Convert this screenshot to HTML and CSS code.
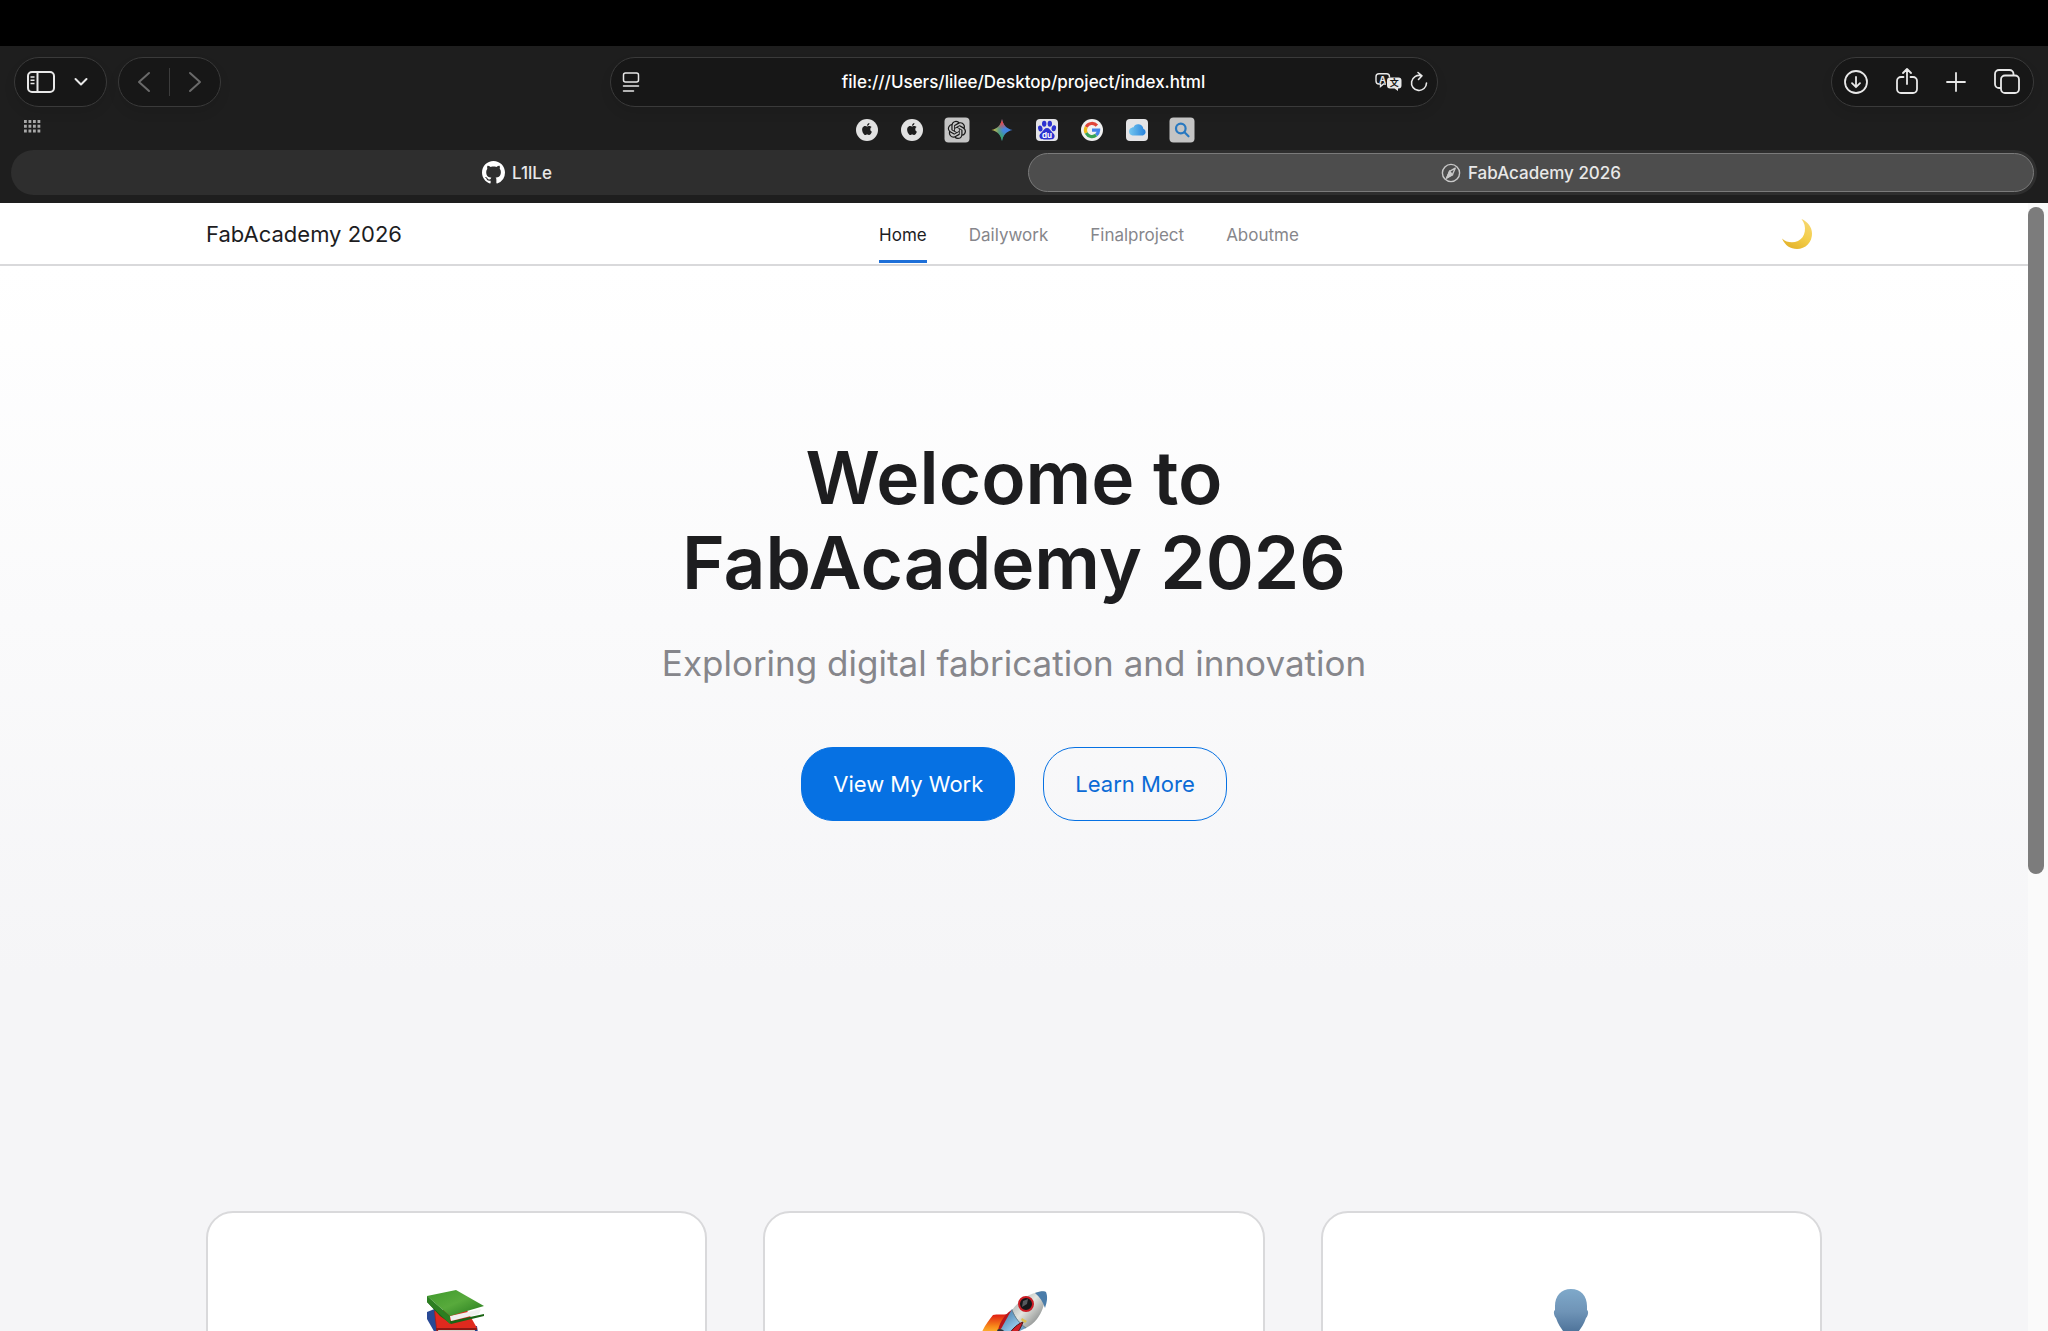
FILE: index.html
```html
<!DOCTYPE html>
<html lang="en">
<head>
  <meta charset="UTF-8">
  <meta name="viewport" content="width=device-width, initial-scale=1.0">
  <title>FabAcademy 2026</title>
  <link rel="stylesheet" href="styles.css">
</head>
<body>
  <header class="browser">
    <div class="toolbar">
      <div class="toolbar-left">
        <div class="pill pill-sidebar">
          <button type="button" aria-label="Sidebar">
            <svg width="28" height="24" viewBox="0 0 28 24" fill="none" stroke="currentColor" stroke-width="2">
              <rect x="1" y="2" width="26" height="20" rx="4"/>
              <path d="M10.500 2v20"/>
              <path d="M3.500 7h4M3.500 10.200h4M3.500 13.400h4" stroke-width="1.500"/>
            </svg>
          </button>
          <button type="button" aria-label="Sidebar menu">
            <svg width="14" height="10" viewBox="0 0 14 10" fill="none" stroke="currentColor" stroke-width="2" stroke-linecap="round" stroke-linejoin="round"><path d="M1.500 2L7 7.500 12.500 2"/></svg>
          </button>
        </div>
        <div class="pill pill-history">
          <button type="button" aria-label="Back">
            <svg width="14" height="22" viewBox="0 0 14 22" fill="none" stroke="currentColor" stroke-width="2" stroke-linecap="round" stroke-linejoin="round"><path d="M12 2L2 11l10 9"/></svg>
          </button>
          <span class="divider"></span>
          <button type="button" aria-label="Forward">
            <svg width="14" height="22" viewBox="0 0 14 22" fill="none" stroke="currentColor" stroke-width="2" stroke-linecap="round" stroke-linejoin="round"><path d="M2 2l10 9-10 9"/></svg>
          </button>
        </div>
      </div>

      <div class="pill address">
        <button type="button" aria-label="Page menu">
          <svg width="18" height="22" viewBox="0 0 18 22" fill="none" stroke="currentColor" stroke-width="1.500" stroke-linecap="round"><rect x="1.500" y="2" width="15" height="9" rx="2"/><path d="M1.500 15h15M1.500 20h10"/></svg>
        </button>
        <input type="text" aria-label="Address" value="file:///Users/lilee/Desktop/project/index.html">
        <button type="button" aria-label="Translate">
          <svg width="27" height="20" viewBox="0 0 27 20">
            <path d="M4 1.800h7.500a3 3 0 0 1 3 3v.700M11 12H8.500L5.500 14.500V12H4a3 3 0 0 1-3-3V4.800a3 3 0 0 1 3-3" fill="none" stroke="currentColor" stroke-width="1.400"/>
            <path d="M15 5.500h8.500a3 3 0 0 1 3 3v5a3 3 0 0 1-3 3H23V19l-3.500-2.500H15a3 3 0 0 1-3-3v-5a3 3 0 0 1 3-3z" fill="currentColor"/>
            <text class="glyph-a" x="7.500" y="10.500">A</text>
            <text class="glyph-wen" x="19.300" y="14.200">文</text>
          </svg>
        </button>
        <button type="button" aria-label="Reload">
          <svg width="18" height="22" viewBox="0 0 18 22" fill="none" stroke="currentColor" stroke-width="1.600" stroke-linecap="round" stroke-linejoin="round"><path d="M11 4.700A7.500 7.500 0 1 0 16.500 12M8 1.500l4 3.300L8.500 8.500"/></svg>
        </button>
      </div>

      <div class="toolbar-right">
        <div class="pill pill-actions">
          <button type="button" aria-label="Downloads">
            <svg width="24" height="28" viewBox="0 0 24 28" fill="none" stroke="currentColor" stroke-width="1.800" stroke-linecap="round" stroke-linejoin="round"><circle cx="12" cy="14" r="11"/><path d="M12 9v10M8 15.200l4 4 4-4"/></svg>
          </button>
          <button type="button" aria-label="Share">
            <svg width="22" height="28" viewBox="0 0 22 28" fill="none" stroke="currentColor" stroke-width="1.800" stroke-linecap="round" stroke-linejoin="round"><path d="M7.500 9H5a4 4 0 0 0-4 4v8a4 4 0 0 0 4 4h12a4 4 0 0 0 4-4v-8a4 4 0 0 0-4-4h-2.500M11 16V1M7 5l4-4 4 4"/></svg>
          </button>
          <button type="button" aria-label="New tab">
            <svg width="20" height="28" viewBox="0 0 20 28" fill="none" stroke="currentColor" stroke-width="1.800" stroke-linecap="round"><path d="M10 5v18M1 14h18"/></svg>
          </button>
          <button type="button" aria-label="Tab overview">
            <svg width="26" height="28" viewBox="0 0 26 28" fill="none" stroke="currentColor" stroke-width="1.800" stroke-linejoin="round"><rect x="7" y="7.500" width="18" height="17.500" rx="4"/><path d="M7 20H5a4 4 0 0 1-4-4V6a4 4 0 0 1 4-4h10.500a4 4 0 0 1 4 4v1.500"/></svg>
          </button>
        </div>
      </div>
    </div>

    <div class="bookmarks">
      <button type="button" class="apps" aria-label="Show bookmarks">
        <svg width="17" height="13" viewBox="0 0 17 13" fill="none" stroke="currentColor" stroke-width="3" stroke-dasharray="2.800 1.700"><path d="M0 1.500h17M0 6.200h17M0 11h17"/></svg>
      </button>
      <nav class="favorites" aria-label="Favorites">
        <a href="#" aria-label="Apple"><svg width="26" height="26" viewBox="0 0 26 26"><circle cx="13" cy="13" r="11" fill="#e2e2e2"/><use href="#apple" x="7" y="6" width="12" height="12"/></svg></a>
        <a href="#" aria-label="iCloud"><svg width="26" height="26" viewBox="0 0 26 26"><circle cx="13" cy="13" r="11" fill="#e2e2e2"/><use href="#apple" x="7" y="6" width="12" height="12"/></svg></a>
        <a href="#" aria-label="ChatGPT">
          <svg width="26" height="26" viewBox="0 0 26 26"><rect x=".5" y=".5" width="25" height="25" rx="4" fill="#c4c4c4"/><g transform="translate(3.800 3.800) scale(.76)"><path fill="#171717" d="M22.2819 9.8211a5.9847 5.9847 0 0 0-.5157-4.9108 6.0462 6.0462 0 0 0-6.5098-2.9A6.0651 6.0651 0 0 0 4.9807 4.1818a5.9847 5.9847 0 0 0-3.9977 2.9 6.0462 6.0462 0 0 0 .7427 7.0966 5.98 5.98 0 0 0 .511 4.9107 6.051 6.051 0 0 0 6.5146 2.9001A5.9847 5.9847 0 0 0 13.2599 24a6.0557 6.0557 0 0 0 5.7718-4.2058 5.9894 5.9894 0 0 0 3.9977-2.9001 6.0557 6.0557 0 0 0-.7475-7.0729zm-9.022 12.6081a4.4755 4.4755 0 0 1-2.8764-1.0408l.1419-.0804 4.7783-2.7582a.7948.7948 0 0 0 .3927-.6813v-6.7369l2.02 1.1686a.071.071 0 0 1 .038.052v5.5826a4.504 4.504 0 0 1-4.4945 4.4944zm-9.6607-4.1254a4.4708 4.4708 0 0 1-.5346-3.0137l.142.0852 4.783 2.7582a.7712.7712 0 0 0 .7806 0l5.8428-3.3685v2.3324a.0804.0804 0 0 1-.0332.0615L9.74 19.9502a4.4992 4.4992 0 0 1-6.1408-1.6464zM2.3408 7.8956a4.485 4.485 0 0 1 2.3655-1.9728V11.6a.7664.7664 0 0 0 .3879.6765l5.8144 3.3543-2.0201 1.1685a.0757.0757 0 0 1-.071 0l-4.8303-2.7865A4.504 4.504 0 0 1 2.3408 7.872zm16.5963 3.8558L13.1038 8.364 15.1192 7.2a.0757.0757 0 0 1 .071 0l4.8303 2.7913a4.4944 4.4944 0 0 1-.6765 8.1042v-5.6772a.79.79 0 0 0-.407-.667zm2.0107-3.0231l-.142-.0852-4.7735-2.7818a.7759.7759 0 0 0-.7854 0L9.409 9.2297V6.8974a.0662.0662 0 0 1 .0284-.0615l4.8303-2.7866a4.4992 4.4992 0 0 1 6.6802 4.66zM8.3065 12.863l-2.02-1.1638a.0804.0804 0 0 1-.038-.0567V6.0742a4.4992 4.4992 0 0 1 7.3757-3.4537l-.142.0805L8.704 5.459a.7948.7948 0 0 0-.3927.6813zm1.0976-2.3654l2.602-1.4998 2.6069 1.4998v2.9994l-2.5974 1.4997-2.6067-1.4997Z"/></g></svg>
        </a>
        <a href="#" aria-label="Gemini">
          <svg width="26" height="26" viewBox="0 0 26 26">
            <defs>
              <linearGradient id="gem-base" x1="0" y1="0" x2="1" y2="0"><stop offset="0" stop-color="#e8c53a"/><stop offset=".35" stop-color="#5e9c80"/><stop offset=".55" stop-color="#4586dc"/><stop offset="1" stop-color="#3f80e8"/></linearGradient>
              <radialGradient id="gem-red" cx=".5" cy=".05" r=".42"><stop offset=".3" stop-color="#e5484a"/><stop offset="1" stop-color="#e5484a" stop-opacity="0"/></radialGradient>
              <radialGradient id="gem-green" cx=".45" cy=".98" r=".45"><stop offset=".2" stop-color="#36a864"/><stop offset="1" stop-color="#36a864" stop-opacity="0"/></radialGradient>
            </defs>
            <path fill="url(#gem-base)" d="M13 2c1 6 4.500 9.800 10.500 11C17.500 14.200 14 18 13 24 12 18 8.500 14.200 2.500 13 8.500 11.800 12 8 13 2z"/>
            <path fill="url(#gem-red)" d="M13 2c1 6 4.500 9.800 10.500 11C17.500 14.200 14 18 13 24 12 18 8.500 14.200 2.500 13 8.500 11.800 12 8 13 2z"/>
            <path fill="url(#gem-green)" d="M13 2c1 6 4.500 9.800 10.500 11C17.500 14.200 14 18 13 24 12 18 8.500 14.200 2.500 13 8.500 11.800 12 8 13 2z"/>
          </svg>
        </a>
        <a href="#" aria-label="Baidu">
          <svg width="26" height="26" viewBox="0 0 26 26"><rect x="2" y="2" width="22" height="22" rx="4" fill="#e4e4e8"/><g fill="#2c32d0"><ellipse cx="6.300" cy="11.500" rx="2.200" ry="3" transform="rotate(-12 6.300 11.500)"/><ellipse cx="10.200" cy="6.700" rx="2.200" ry="3"/><ellipse cx="15.800" cy="6.700" rx="2.200" ry="3"/><ellipse cx="19.800" cy="11.300" rx="2.200" ry="3" transform="rotate(12 19.800 11.300)"/><path d="M13 11c-2.500 0-3 2.200-5 4-1.700 1.500-3 3-2.400 5 .7 2.400 3 2.500 7.400 2.500s6.800 0 7.500-2.500c.6-2-.8-3.500-2.500-5-2-1.800-2.500-4-5-4z"/></g><text class="glyph-du" x="13" y="20.500">du</text></svg>
        </a>
        <a href="#" aria-label="Google">
          <svg width="26" height="26" viewBox="0 0 26 26"><circle cx="13" cy="13" r="11" fill="#f1f1f1"/><g fill="none" stroke-width="3.200"><path d="M17.900 8.600A6.600 6.600 0 0 0 7.200 9.900" stroke="#e0453a"/><path d="M7.200 9.900a6.600 6.600 0 0 0 0 6.200" stroke="#efba1c"/><path d="M7.200 16.100a6.600 6.600 0 0 0 10 2" stroke="#38a355"/><path d="M17.200 18.100A6.600 6.600 0 0 0 19.600 13.200H13" stroke="#4383ea"/></g></svg>
        </a>
        <a href="#" aria-label="iCloud Drive">
          <svg width="26" height="26" viewBox="0 0 26 26"><defs><linearGradient id="cloud" x1="0" y1="0" x2="1" y2="0"><stop offset="0" stop-color="#74c7ef"/><stop offset="1" stop-color="#2782dc"/></linearGradient></defs><rect x="2" y="2" width="22" height="22" rx="4" fill="#e4e4e6"/><path fill="url(#cloud)" d="M8.500 18.500a4 4 0 0 1-.6-7.800c.6-.3 1-.4 1.500-.3a5.200 5.200 0 0 1 9.900 1.400 3.500 3.500 0 0 1-.3 6.700z"/></svg>
        </a>
        <a href="#" aria-label="Search">
          <svg width="26" height="26" viewBox="0 0 26 26"><rect x=".5" y=".5" width="25" height="25" rx="4" fill="#c4c4c4"/><g fill="none" stroke="#2878c0" stroke-width="2.200" stroke-linecap="round"><circle cx="11.800" cy="11.500" r="4.800"/><path d="M15.500 15.300l4 4"/></g></svg>
        </a>
      </nav>
    </div>

    <div class="tabs" role="tablist">
      <button type="button" class="tab" role="tab" aria-selected="false">
        <svg width="23" height="23" viewBox="0 0 16 16" fill="#fff"><path d="M8 0C3.580 0 0 3.580 0 8c0 3.540 2.290 6.530 5.470 7.590.4.070.55-.17.55-.38 0-.19-.01-.82-.01-1.490-2.010.37-2.530-.49-2.690-.94-.09-.23-.48-.94-.82-1.130-.28-.15-.68-.52-.01-.53.63-.01 1.080.58 1.230.82.72 1.210 1.870.87 2.330.66.07-.52.28-.87.51-1.070-1.780-.2-3.640-.89-3.640-3.950 0-.87.31-1.590.82-2.150-.08-.2-.36-1.020.08-2.120 0 0 .67-.21 2.200.82.64-.18 1.320-.27 2-.27s1.360.09 2 .27c1.530-1.040 2.200-.82 2.200-.82.44 1.100.16 1.920.08 2.120.51.56.82 1.270.82 2.150 0 3.070-1.870 3.750-3.650 3.950.29.25.54.73.54 1.480 0 1.070-.01 1.930-.01 2.200 0 .21.15.46.55.38A8.010 8.010 0 0 0 16 8c0-4.420-3.580-8-8-8z"/></svg>
        L1lLe
      </button>
      <button type="button" class="tab tab-active" role="tab" aria-selected="true">
        <svg width="20" height="20" viewBox="0 0 20 20" fill="none" stroke="#c8c8c8" stroke-width="1.400"><circle cx="10" cy="10" r="8.600"/><path d="M14.200 5.200L8.600 8.300 5.800 14.800l5.600-3.100z" stroke-linejoin="round"/><path d="M8.600 8.300l2.800 3.400-5.600 3.100z" fill="#c8c8c8"/></svg>
        FabAcademy 2026
      </button>
    </div>
  </header>

  <div class="viewport">
    <div class="page">
      <header class="site-header">
        <div class="container header-inner">
          <a class="logo" href="#">FabAcademy 2026</a>
          <nav class="site-nav">
            <a class="active" href="#">Home</a>
            <a href="#">Dailywork</a>
            <a href="#">Finalproject</a>
            <a href="#">Aboutme</a>
          </nav>
          <button type="button" class="theme-toggle" aria-label="Toggle dark mode">
            <svg width="32" height="32" viewBox="0 0 32 32">
              <defs><linearGradient id="moon" x1="1" y1="0" x2=".4" y2="1"><stop offset="0" stop-color="#f7d978"/><stop offset=".6" stop-color="#f3cd48"/><stop offset="1" stop-color="#e5b52e"/></linearGradient></defs>
              <path fill="url(#moon)" d="M20.500 1c6 2.500 10.500 8 10.500 14.500A15 15 0 0 1 16 31C9.500 31 4 27.500 1 20.500c4.500 4 10.500 5 16 2.500 7.500-3.500 9.500-14.500 3.500-22z"/>
            </svg>
          </button>
        </div>
      </header>

      <main>
        <section class="hero">
          <h1>Welcome to<br>FabAcademy 2026</h1>
          <p>Exploring digital fabrication and innovation</p>
          <div class="hero-actions">
            <a class="btn btn-primary" href="#">View My Work</a>
            <a class="btn btn-outline" href="#">Learn More</a>
          </div>
        </section>

        <section class="container cards">
          <article class="card">
            <svg width="80" height="80" viewBox="2 0 80 80">
              <defs><linearGradient id="book" x1="0" y1="0" x2="1" y2="1"><stop offset="0" stop-color="#3f9a2c"/><stop offset=".5" stop-color="#58aa3c"/><stop offset="1" stop-color="#23781c"/></linearGradient></defs>
              <path fill="#294a96" d="M12 26l10-4 6 28-8-3-8-14z"/>
              <path fill="#203f8c" d="M20 46l42-6 2 14-38 10z"/>
              <path fill="#a8201c" d="M19 24l3 26 8 8-2-24z"/>
              <path fill="#e02a1e" d="M20 25l30-4 12 21-40 1z"/>
              <path fill="#d9d2cc" d="M23 44h37l-1 8-33 3z"/>
              <path fill="#8f1814" d="M21 42h41v2H21z"/>
              <path fill="#1b6414" d="M12 10l24 25 33-7v2l-33 8-11-8-13-14z"/>
              <path fill="#f0f0ee" d="M35 30l31-7-2 5-28 7z"/>
              <path fill="url(#book)" d="M12 10l29-6 28 16-34 10z"/>
              <path fill="#2c7f21" d="M12 10l23 20v8L12 16z"/>
            </svg>
          </article>
          <article class="card">
            <svg width="80" height="80" viewBox="0 0 80 80">
              <defs>
                <linearGradient id="hull" x1="0" y1="0" x2="1" y2="1"><stop offset="0" stop-color="#8d999e"/><stop offset=".45" stop-color="#e4e5df"/><stop offset="1" stop-color="#62676a"/></linearGradient>
                <linearGradient id="steel" x1="0" y1="0" x2="1" y2="1"><stop offset="0" stop-color="#356f9e"/><stop offset=".5" stop-color="#8fc1e4"/><stop offset="1" stop-color="#285b86"/></linearGradient>
                <linearGradient id="flame" x1="0" y1="0" x2="0" y2="1"><stop offset="0" stop-color="#df1812"/><stop offset=".5" stop-color="#f88a1a"/><stop offset="1" stop-color="#ffe548"/></linearGradient>
              </defs>
              <path fill="url(#flame)" d="M34 28c-5 1-11 0-15 1C14 35 9 42 5 53l22-3z"/>
              <path fill="#b8151b" d="M39 23c-7 4-13 12-15 21l12-5z"/>
              <path fill="url(#steel)" d="M38 23L27 43l6 8 19-9 8-12z"/>
              <path fill="url(#hull)" d="M38 24C46 13 58 6 69 5c4 5 1 19-6 28-3 4-7 7-11 9-6-4-10-10-14-18z"/>
              <path fill="#4a7ca9" d="M61 7c5-2 10-2 11-1 2 5 1 10-1 16-2-6-5-11-10-15z"/>
              <path fill="none" stroke="#6c7f89" d="M38 24c3 8 8 14 14 18"/>
              <ellipse cx="52" cy="18" rx="7" ry="7" fill="#151619" stroke="#cb1c24" stroke-width="2"/>
              <path fill="#55585d" d="M49 15l5-2-1 5-5 3z"/>
              <path fill="#cf1f26" stroke="#52171a" d="M49 36c-8 3-13 10-17 17 7 0 13-6 17-17z"/>
              <path fill="#e0c04e" d="M48 32l5 3-2 2-4-3z"/>
              <path fill="#273138" d="M23 44c4-3 8 1 10 5l-6 4z"/>
            </svg>
          </article>
          <article class="card">
            <svg width="80" height="80" viewBox="0 0 80 80">
              <defs><linearGradient id="person" x1="0" y1="0" x2="0" y2="1"><stop offset="0" stop-color="#7fa9ca"/><stop offset=".3" stop-color="#6f94b7"/><stop offset=".6" stop-color="#4b7097"/><stop offset="1" stop-color="#3c6187"/></linearGradient></defs>
              <path fill="url(#person)" d="M40 3c-10 0-16 7-16 17v4c-2 1-1 6 1 8 2 6 5 10 7 13v9L8 64v14h64V64L48 54v-9c2-3 5-7 7-13 2-2 3-7 1-8v-4C56 10 50 3 40 3z"/>
            </svg>
          </article>
        </section>
      </main>
    </div>
    <div class="scrollbar"><div class="thumb"></div></div>
  </div>

  <svg class="sprite" aria-hidden="true">
    <symbol id="apple" viewBox="0 0 24 24"><path fill="#1e1e1e" d="M12.152 6.896c-.948 0-2.415-1.078-3.960-1.040-2.040.027-3.910 1.183-4.961 3.014-2.117 3.675-.546 9.103 1.519 12.090 1.013 1.454 2.208 3.090 3.792 3.039 1.520-.065 2.090-.987 3.935-.987 1.831 0 2.350.987 3.960.948 1.637-.026 2.676-1.480 3.676-2.948 1.156-1.688 1.636-3.325 1.662-3.415-.039-.013-3.182-1.221-3.220-4.857-.026-3.040 2.480-4.494 2.597-4.559-1.429-2.090-3.623-2.324-4.390-2.376-2-.156-3.675 1.090-4.610 1.090zM15.530 3.830c.843-1.012 1.400-2.427 1.245-3.830-1.207.052-2.662.805-3.532 1.818-.78.896-1.454 2.338-1.273 3.714 1.338.104 2.715-.688 3.559-1.701"/></symbol>
  </svg>
</body>
</html>
```
FILE: styles.css
```css
* {
  margin: 0;
  padding: 0;
  box-sizing: border-box;
}

body {
  font-family: Inter, "Liberation Sans", "Noto Sans CJK SC", sans-serif;
  height: 100vh;
  display: flex;
  flex-direction: column;
  overflow: hidden;
  background: #f5f5f7;
  color: #1d1d1f;
}

a {
  text-decoration: none;
  color: inherit;
}

button {
  border: none;
  background: none;
  color: inherit;
  font: inherit;
  cursor: pointer;
}

svg {
  display: block;
}

.sprite {
  display: none;
}

/* browser window */
.browser {
  background: #1e1e1e;
  border-top: 46px solid #000;
  padding: 11px 14px 8px;
  color: #e8e8e8;
}

.toolbar {
  display: grid;
  grid-template-columns: 1fr 828px 1fr;
}

.toolbar-left {
  display: flex;
  gap: 11px;
}

.toolbar-right {
  display: flex;
  justify-content: flex-end;
}

.pill {
  display: flex;
  align-items: center;
  height: 50px;
  border: 1px solid #3a3a3a;
  border-radius: 25px;
  background: #171717;
  box-shadow: 0 6px 12px rgba(0, 0, 0, 0.08);
}

.pill-sidebar {
  gap: 19px;
  padding: 0 18px 0 12px;
}

.pill-history {
  gap: 18px;
  padding: 0 18px;
  color: #6a6a6a;
}

.divider {
  width: 1px;
  height: 28px;
  background: #3c3c3c;
}

.pill-actions {
  gap: 28px;
  padding: 0 13px 0 12px;
}

.address {
  gap: 8px;
  padding: 0 9px 0 11px;
}

.address input {
  flex: 1;
  min-width: 0;
  border: none;
  outline: none;
  background: none;
  color: #fff;
  font: 500 17px Inter, "Liberation Sans", sans-serif;
  text-align: center;
  padding-left: 32px;
}

.glyph-a,
.glyph-wen,
.glyph-du {
  font-weight: 700;
  text-anchor: middle;
}

.glyph-a {
  font-size: 9px;
  fill: #e8e8e8;
}

.glyph-wen {
  font-family: "Noto Sans CJK SC", sans-serif;
  font-size: 9px;
  fill: #171717;
}

.glyph-du {
  font-size: 8px;
  fill: #fff;
}

.bookmarks {
  display: grid;
  grid-template-columns: 1fr auto 1fr;
  align-items: center;
  height: 43px;
  padding-top: 2px;
}

.apps {
  justify-self: start;
  padding: 0 0 6px 10px;
  color: #a8a8a8;
}

.favorites {
  display: flex;
  gap: 19px;
}

.tabs {
  display: grid;
  grid-template-columns: 1fr 1fr;
  gap: 8px;
  margin: 0 -3px;
  padding: 3px;
  border-radius: 23px;
  background: #2e2e2e;
}

.tab {
  display: flex;
  align-items: center;
  justify-content: center;
  gap: 7px;
  height: 39px;
  border: 1px solid transparent;
  border-radius: 20px;
  font-size: 17px;
  font-weight: 500;
}

.tab-active {
  background: #4d4d4d;
  border-color: #7a7a7a;
}

/* page */
.viewport {
  flex: 1;
  min-height: 0;
  display: flex;
}

.page {
  flex: 1;
  overflow: hidden;
}

.scrollbar {
  width: 20px;
  padding: 4px 4px 12px 0;
  background: #fafafa;
}

.thumb {
  height: 60%;
  border-radius: 8px;
  background: #7c7c7c;
}

.container {
  max-width: 1616px;
  margin: 0 auto;
}

.site-header {
  background: #fff;
  border-bottom: 2px solid #d9d9db;
}

.header-inner {
  display: grid;
  grid-template-columns: 1fr auto 1fr;
  align-items: center;
  height: 61px;
}

.logo {
  font-size: 22px;
}

.site-nav {
  display: flex;
  gap: 42px;
  align-self: end;
  margin: 0 0 1px 150px;
}

.site-nav a {
  padding: 15px 0;
  border-bottom: 3px solid transparent;
  color: #86868b;
  font-size: 17px;
  line-height: 20px;
}

.site-nav .active {
  color: #1d1d1f;
  border-color: #1d6fd8;
}

.theme-toggle {
  justify-self: end;
  padding-right: 9px;
}

.hero {
  height: 945px;
  padding: 169px 20px;
  text-align: center;
  background: linear-gradient(#fff, #f5f5f7 75%);
}

.hero h1 {
  font-size: 73px;
  font-weight: 600;
  line-height: 85px;
  margin-bottom: 30px;
}

.hero p {
  color: #86868b;
  font-size: 35px;
  line-height: 56px;
  margin-bottom: 56px;
}

.hero-actions {
  display: flex;
  justify-content: center;
  gap: 28px;
}

.btn {
  padding: 20px 31px;
  border: 1px solid #0671e3;
  border-radius: 32px;
  font-size: 22px;
  line-height: 32px;
}

.btn-primary {
  background: #0671e3;
  color: #fff;
}

.btn-outline {
  color: #0b6bd6;
}

.cards {
  display: grid;
  grid-template-columns: repeat(3, 1fr);
  gap: 56px;
}

.card {
  display: flex;
  justify-content: center;
  padding: 73px 40px;
  background: #fff;
  border: 2px solid #d9d9db;
  border-radius: 27px;
}
```
